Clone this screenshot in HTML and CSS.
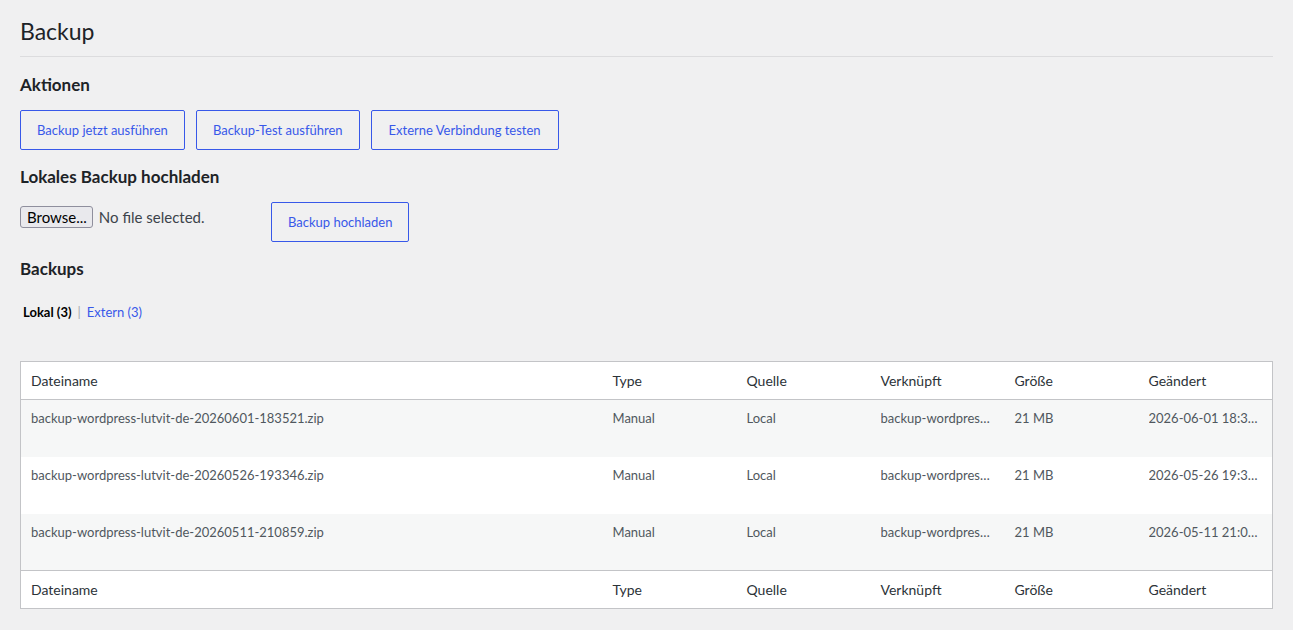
FILE: index.html
```html
<!DOCTYPE html>
<html lang="de">
<head>
    <meta charset="UTF-8">
    <title>Backup</title>
    <link rel="stylesheet" href="styles.css">
</head>
<body>
    <div class="wrap">
        <h1>Backup</h1>

        <h2 class="first">Aktionen</h2>
        <div class="actions">
            <button class="btn">Backup jetzt ausführen</button>
            <button class="btn">Backup-Test ausführen</button>
            <button class="btn">Externe Verbindung testen</button>
        </div>

        <h2>Lokales Backup hochladen</h2>
        <form class="upload">
            <div class="file-input">
                <span class="browse">Browse...</span>
                <span class="file-name">No file selected.</span>
            </div>
            <button type="button" class="btn">Backup hochladen</button>
        </form>

        <h2>Backups</h2>
        <ul class="subsubsub">
            <li class="current">Lokal (3)</li>
            <li class="sep">|</li>
            <li><a href="#">Extern (3)</a></li>
        </ul>

        <table class="backup-table">
            <colgroup>
                <col>
                <col class="col-small">
                <col class="col-small">
                <col class="col-small">
                <col class="col-small">
                <col class="col-small">
            </colgroup>
            <thead>
                <tr>
                    <th>Dateiname</th>
                    <th>Type</th>
                    <th>Quelle</th>
                    <th>Verknüpft</th>
                    <th>Größe</th>
                    <th>Geändert</th>
                </tr>
            </thead>
            <tbody>
                <tr>
                    <td>backup-wordpress-lutvit-de-20260601-183521.zip</td>
                    <td>Manual</td>
                    <td>Local</td>
                    <td><span class="trunc">backup-wordpress-lutvit-de-20260601-183521.zip</span></td>
                    <td>21 MB</td>
                    <td><span class="trunc">2026-06-01 18:35:21</span></td>
                </tr>
                <tr>
                    <td>backup-wordpress-lutvit-de-20260526-193346.zip</td>
                    <td>Manual</td>
                    <td>Local</td>
                    <td><span class="trunc">backup-wordpress-lutvit-de-20260526-193346.zip</span></td>
                    <td>21 MB</td>
                    <td><span class="trunc">2026-05-26 19:33:46</span></td>
                </tr>
                <tr>
                    <td>backup-wordpress-lutvit-de-20260511-210859.zip</td>
                    <td>Manual</td>
                    <td>Local</td>
                    <td><span class="trunc">backup-wordpress-lutvit-de-20260511-210859.zip</span></td>
                    <td>21 MB</td>
                    <td><span class="trunc">2026-05-11 21:08:59</span></td>
                </tr>
            </tbody>
            <tfoot>
                <tr>
                    <th>Dateiname</th>
                    <th>Type</th>
                    <th>Quelle</th>
                    <th>Verknüpft</th>
                    <th>Größe</th>
                    <th>Geändert</th>
                </tr>
            </tfoot>
        </table>
    </div>
</body>
</html>
```

FILE: styles.css
```css
* {
    box-sizing: border-box;
    margin: 0;
    padding: 0;
}

body {
    background-color: #f0f0f1;
    color: #1d2327;
    font-family: Lato, "Liberation Sans", sans-serif;
    font-size: 13px;
}

.wrap {
    padding: 0 20px;
}

h1 {
    font-size: 23px;
    font-weight: 400;
    line-height: 29px;
    padding: 17px 0 10px;
    border-bottom: 1px solid #dcdcde;
}

h2 {
    font-size: 17px;
    font-weight: 700;
    line-height: 22px;
    margin: 16px 0 14px;
}

h2.first {
    margin-top: 17px;
}

.btn {
    background: transparent;
    border: 1px solid #3858e9;
    border-radius: 2px;
    color: #3858e9;
    font-family: inherit;
    font-size: 13px;
    height: 40px;
    padding: 0 16px;
    cursor: pointer;
}

.actions {
    display: flex;
    gap: 11px;
}

.actions .btn:last-child {
    padding: 0 17px;
}

.upload {
    display: flex;
    align-items: flex-start;
    gap: 10px;
}

.file-input {
    display: flex;
    align-items: center;
    gap: 6px;
    width: 241px;
    padding-top: 4px;
    font-size: 15px;
    line-height: 18px;
}

.browse {
    background: #e9e9ed;
    border: 1px solid #8f8f9d;
    border-radius: 3px;
    padding: 1px 5px 1px 6px;
    color: #000;
}

.file-name {
    color: #3c434a;
}

.subsubsub {
    list-style: none;
    display: flex;
    gap: 6px;
    margin: 22px 0 39px 3px;
    line-height: 20px;
}

.subsubsub .current {
    font-weight: 700;
    color: #000;
}

.subsubsub .sep {
    color: #a7aaad;
}

.subsubsub a {
    color: #3858e9;
    text-decoration: none;
}

.backup-table {
    width: 100%;
    table-layout: fixed;
    border-collapse: collapse;
    background: #fff;
    border: 1px solid #c3c4c7;
}

.col-small {
    width: 134px;
}

.backup-table th {
    font-weight: 400;
    font-size: 14px;
    text-align: left;
    color: #2c3338;
    height: 38px;
    padding: 0 10px;
}

.backup-table thead th {
    border-bottom: 1px solid #c3c4c7;
}

.backup-table tfoot th {
    border-top: 1px solid #c3c4c7;
}

.backup-table td {
    color: #50575e;
    height: 57px;
    padding: 10px 10px 8px;
    vertical-align: top;
    white-space: nowrap;
}

.trunc {
    display: block;
    overflow: hidden;
    text-overflow: ellipsis;
}

.backup-table tbody tr:nth-child(odd) {
    background: #f6f7f7;
}
```
